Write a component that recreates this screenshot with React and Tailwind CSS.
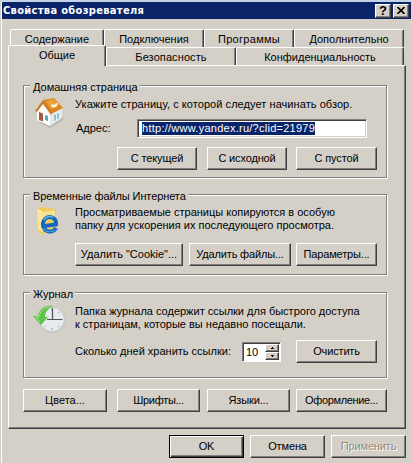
import clsx from "clsx";

const RAISED =
  "border border-t-white border-l-white border-r-[#404040] border-b-[#404040] shadow-[inset_-1px_-1px_0_#808080]";

const Button = ({ className, textClass = "tracking-[-0.15px]", children, disabled, primary }) => (
  <button
    className={clsx(
      "flex h-[23px] shrink-0 items-center justify-center bg-[#d4d0c8] whitespace-nowrap",
      primary
        ? "border border-black shadow-[inset_1px_1px_0_#fff,inset_-1px_-1px_0_#404040,inset_-2px_-2px_0_#808080]"
        : RAISED,
      disabled && "text-[#8c8982] [text-shadow:1px_1px_0_#fff]",
      className
    )}
  >
    <span className={textClass}>{children}</span>
  </button>
);

const Tab = ({ className, textClass, children }) => (
  <div
    className={clsx(
      "flex shrink-0 justify-center rounded-t-[2px] border border-b-0 border-t-white border-l-white border-r-[#404040] bg-[#d4d0c8] shadow-[inset_-1px_0_0_#808080]",
      className
    )}
  >
    <span className={textClass}>{children}</span>
  </div>
);

const Group = ({ title, titleClass, className, children }) => (
  <section
    className={clsx(
      "relative ml-[14px] w-[364px] border border-[#808080] shadow-[1px_1px_0_#fff,inset_1px_1px_0_#fff]",
      className
    )}
  >
    <h2 className="absolute -top-[6px] left-[6px] bg-[#d4d0c8] pr-[2px] pl-[3px] leading-[14px] whitespace-nowrap">
      <span className={titleClass}>{title}</span>
    </h2>
    {children}
  </section>
);

const HomeIcon = () => (
  <svg width="31" height="30" viewBox="0 0 31 30" className="shrink-0">
    <path d="M4 24l12 6 13-8v-3l-14 6z" fill="#bab7b0" />
    <path d="M3 12l6-8 8 12-1 12-13-6z" fill="#fdfdfb" />
    <path d="M16 15l12-5v10l-12 8z" fill="#e6ebee" />
    <path d="M9 2l11-2 9 10-12 6z" fill="#dc861f" />
    <path d="M12 3l8-2 5 6-8 4z" fill="#eda03a" />
    <path d="M9 2L1 13l2 1 6-8 8 11 1-2z" fill="#cf7a2c" />
    <path d="M18 6l2 1 4-3-1 4-3 2-3-2z" fill="#fff4e2" />
    <path d="M5 14l4 1.500v8L5 22z" fill="#a85a3c" />
    <path d="M11 17l3 1v5l-3-1z" fill="#5aa3bf" />
    <path d="M20 17l5-2v5l-5 3z" fill="#8fc0d4" />
    <path d="M22.500 16v6" stroke="#fff" strokeWidth=".8" />
  </svg>
);

const ExplorerFolderIcon = () => (
  <svg width="24" height="30" viewBox="0 0 24 30" className="shrink-0">
    <path d="M1 2l4-1 14 2 1 3v17l-12 5-6-2z" fill="#f0cb5c" />
    <path d="M1 2l6 4v20l-5-2z" fill="#fbe799" />
    <path d="M7 6l12-2v6L7 14z" fill="#f9e08e" />
    <path
      d="M20 22c-2 3.500-6 4.500-9.300 2.800S6 19 7.500 15.300s5.200-5.200 8.500-3.800c3.200 1.400 4.500 4 4 6.900L8.500 20"
      fill="none"
      stroke="#1668bd"
      strokeWidth="4"
    />
    <path d="M8 14c2-3.500 6-4.500 9-2.500" fill="none" stroke="#5eb5ef" strokeWidth="1.500" />
    <path d="M7 22c2 4 8 5 12 2" fill="none" stroke="#39a0e5" strokeWidth="1.200" />
  </svg>
);

const HistoryIcon = () => (
  <svg width="33" height="29" viewBox="0 0 33 29" className="shrink-0">
    <circle cx="19" cy="15" r="13" fill="#bfc7ca" />
    <circle cx="19" cy="14.500" r="11.800" fill="#e6ebed" />
    <path d="M19 4v2M19 23v2M28 14.500h2M25.500 8l1-1M25.500 21l1 1M12.500 21l-1 1" stroke="#8b9599" />
    <path d="M19.500 3v11.500H29M19 14.500h-5" fill="none" stroke="#4c5357" strokeWidth="1.200" />
    <path d="M20 1C12 0 6 4 5 11H0l8 9 7-8h-3c0-5 3-8 8-11z" fill="#5fc348" />
    <path d="M17 2C11 2 7 6 6 12H3l4 5" fill="none" stroke="#a0e489" />
  </svg>
);

const SpinButton = ({ down }) => (
  <div className={clsx("flex h-[8px] w-[14px] items-center justify-center bg-[#d4d0c8]", RAISED)}>
    <svg width="3" height="2" viewBox="0 0 3 2" shapeRendering="crispEdges">
      <path d={down ? "M0 0h3v1H2v1H1V1H0z" : "M0 2h3V1H2V0H1v1H0z"} />
    </svg>
  </div>
);

export default function App() {
  return (
    <div className="flex h-[463px] w-[411px] flex-col overflow-hidden border-t-2 border-l border-t-[#c3d4e8] border-l-[#d4d0c8] bg-[#d4d0c8] font-['Liberation_Sans',Arial,sans-serif] text-[11px] leading-[13px] text-black shadow-[inset_1px_0_0_#fff]">
      <header className="ml-px flex h-[17px] shrink-0 items-center bg-[#0a246a] pr-[2px] pl-px text-white">
        <h1 className="flex-1 font-['DejaVu_Sans_Condensed','DejaVu_Sans',sans-serif] text-[11px] font-bold tracking-[0.33px] whitespace-nowrap">
          Свойства обозревателя
        </h1>
        <div className="flex gap-[2px]">
          <button className={clsx("flex h-[14px] w-[16px] items-center justify-center bg-[#d4d0c8] text-[13px] font-bold text-black", RAISED)}>
            ?
          </button>
          <button className={clsx("flex h-[14px] w-[16px] items-center justify-center bg-[#d4d0c8]", RAISED)}>
            <svg width="8" height="7" viewBox="0 0 8 7">
              <path d="M.5 0l7 7M7.500 0l-7 7" stroke="#000" strokeWidth="1.600" />
            </svg>
          </button>
        </div>
      </header>

      <nav className="mt-[10px] ml-[7px] shrink-0">
        <div className="flex h-[16px] pl-[2px]">
          <Tab className="h-[18px] w-[94px] pt-[3px]">Содержание</Tab>
          <Tab className="h-[18px] w-[100px] pt-[3px]">Подключения</Tab>
          <Tab className="h-[18px] w-[90px] pt-[3px]" textClass="tracking-[0.3px]">Программы</Tab>
          <Tab className="h-[18px] w-[110px] pt-[3px]">Дополнительно</Tab>
        </div>
        <div className="flex h-[20px] items-end">
          <Tab className="relative z-10 -mb-px h-[21px] w-[98px] pt-[3px]">Общие</Tab>
          <Tab className="h-[18px] w-[130px] pt-[3px]" textClass="tracking-[0.1px]">Безопасность</Tab>
          <Tab className="h-[18px] w-[168px] pt-[3px]">Конфиденциальность</Tab>
        </div>
      </nav>

      <main className={clsx("ml-[7px] h-[364px] w-[398px] shrink-0", RAISED)}>
        <Group title="Домашняя страница" className="mt-[19px] h-[93px]">
          <div className="flex pt-[12px] pl-[10px]">
            <HomeIcon />
            <div className="ml-[10px] flex-1">
              <p className="tracking-[0.06px] whitespace-nowrap">Укажите страницу, с которой следует начинать обзор.</p>
              <div className="mt-[8px] flex items-center">
                <label className="w-[62px] pl-px">Адрес:</label>
                <div className="flex h-[19px] w-[230px] items-center border border-t-[#808080] border-r-white border-b-white border-l-[#808080] bg-white pl-[4px] shadow-[inset_1px_1px_0_#404040,inset_-1px_-1px_0_#d4d0c8]">
                  <span className="h-[13px] bg-[#0a246a] leading-[13px] tracking-[0.26px] whitespace-nowrap text-white">
                    http://www.yandex.ru/?clid=21979
                  </span>
                </div>
              </div>
            </div>
          </div>
          <div className="mt-[9px] flex gap-[10px] pl-[93px]">
            <Button className="w-[80px]">С текущей</Button>
            <Button className="w-[80px]">С исходной</Button>
            <Button className="-ml-px w-[81px]">С пустой</Button>
          </div>
        </Group>

        <Group
          title="Временные файлы Интернета"
          titleClass="tracking-[-0.1px]"
          className="mt-[16px] h-[81px]"
        >
          <div className="flex h-[48px] pt-[11px] pl-[12px]">
            <ExplorerFolderIcon />
            <p className="ml-[15px] whitespace-nowrap">
              <span>Просматриваемые страницы копируются в особую</span>
              <br />
              <span>папку для ускорения их последующего просмотра.</span>
            </p>
          </div>
          <div className="flex pl-[51px]">
            <Button className="w-[108px]" textClass="">Удалить "Cookie"...</Button>
            <Button className="ml-[6px] w-[102px]">Удалить файлы...</Button>
            <Button className="ml-[5px] w-[81px]">Параметры...</Button>
          </div>
        </Group>

        <Group title="Журнал" className="mt-[17px] h-[86px]">
          <div className="flex h-[47px] pt-[12px] pl-[9px]">
            <HistoryIcon />
            <p className="ml-[9px] whitespace-nowrap">
              <span>Папка журнала содержит ссылки для быстрого доступа</span>
              <br />
              <span>к страницам, которые вы недавно посещали.</span>
            </p>
          </div>
          <div className="flex items-center pl-[51px]">
            <span className="w-[167px] whitespace-nowrap">Сколько дней хранить ссылки:</span>
            <div className="flex h-[20px] w-[39px] border border-t-[#808080] border-r-white border-b-white border-l-[#808080] bg-white p-px shadow-[inset_1px_1px_0_#404040]">
              <span className="w-[21px] pl-[2px] leading-[16px]">10</span>
              <div className="flex flex-col">
                <SpinButton />
                <SpinButton down />
              </div>
            </div>
            <Button className="ml-[15px] w-[81px]">Очистить</Button>
          </div>
        </Group>

        <div className="mt-[11px] ml-[14px] flex">
          <Button className="w-[84px]" textClass="">Цвета...</Button>
          <Button className="ml-[10px] w-[83px]" textClass="tracking-[-0.3px]">Шрифты...</Button>
          <Button className="ml-[7px] w-[83px]">Языки...</Button>
          <Button className="ml-[6px] w-[91px]" textClass="tracking-[-0.35px]">Оформление...</Button>
        </div>
      </main>

      <footer className="mt-[6px] ml-[168px] flex gap-[6px]">
        <Button primary className="w-[75px]">OK</Button>
        <Button className="w-[75px]">Отмена</Button>
        <Button disabled className="w-[75px]">Применить</Button>
      </footer>
    </div>
  );
}
